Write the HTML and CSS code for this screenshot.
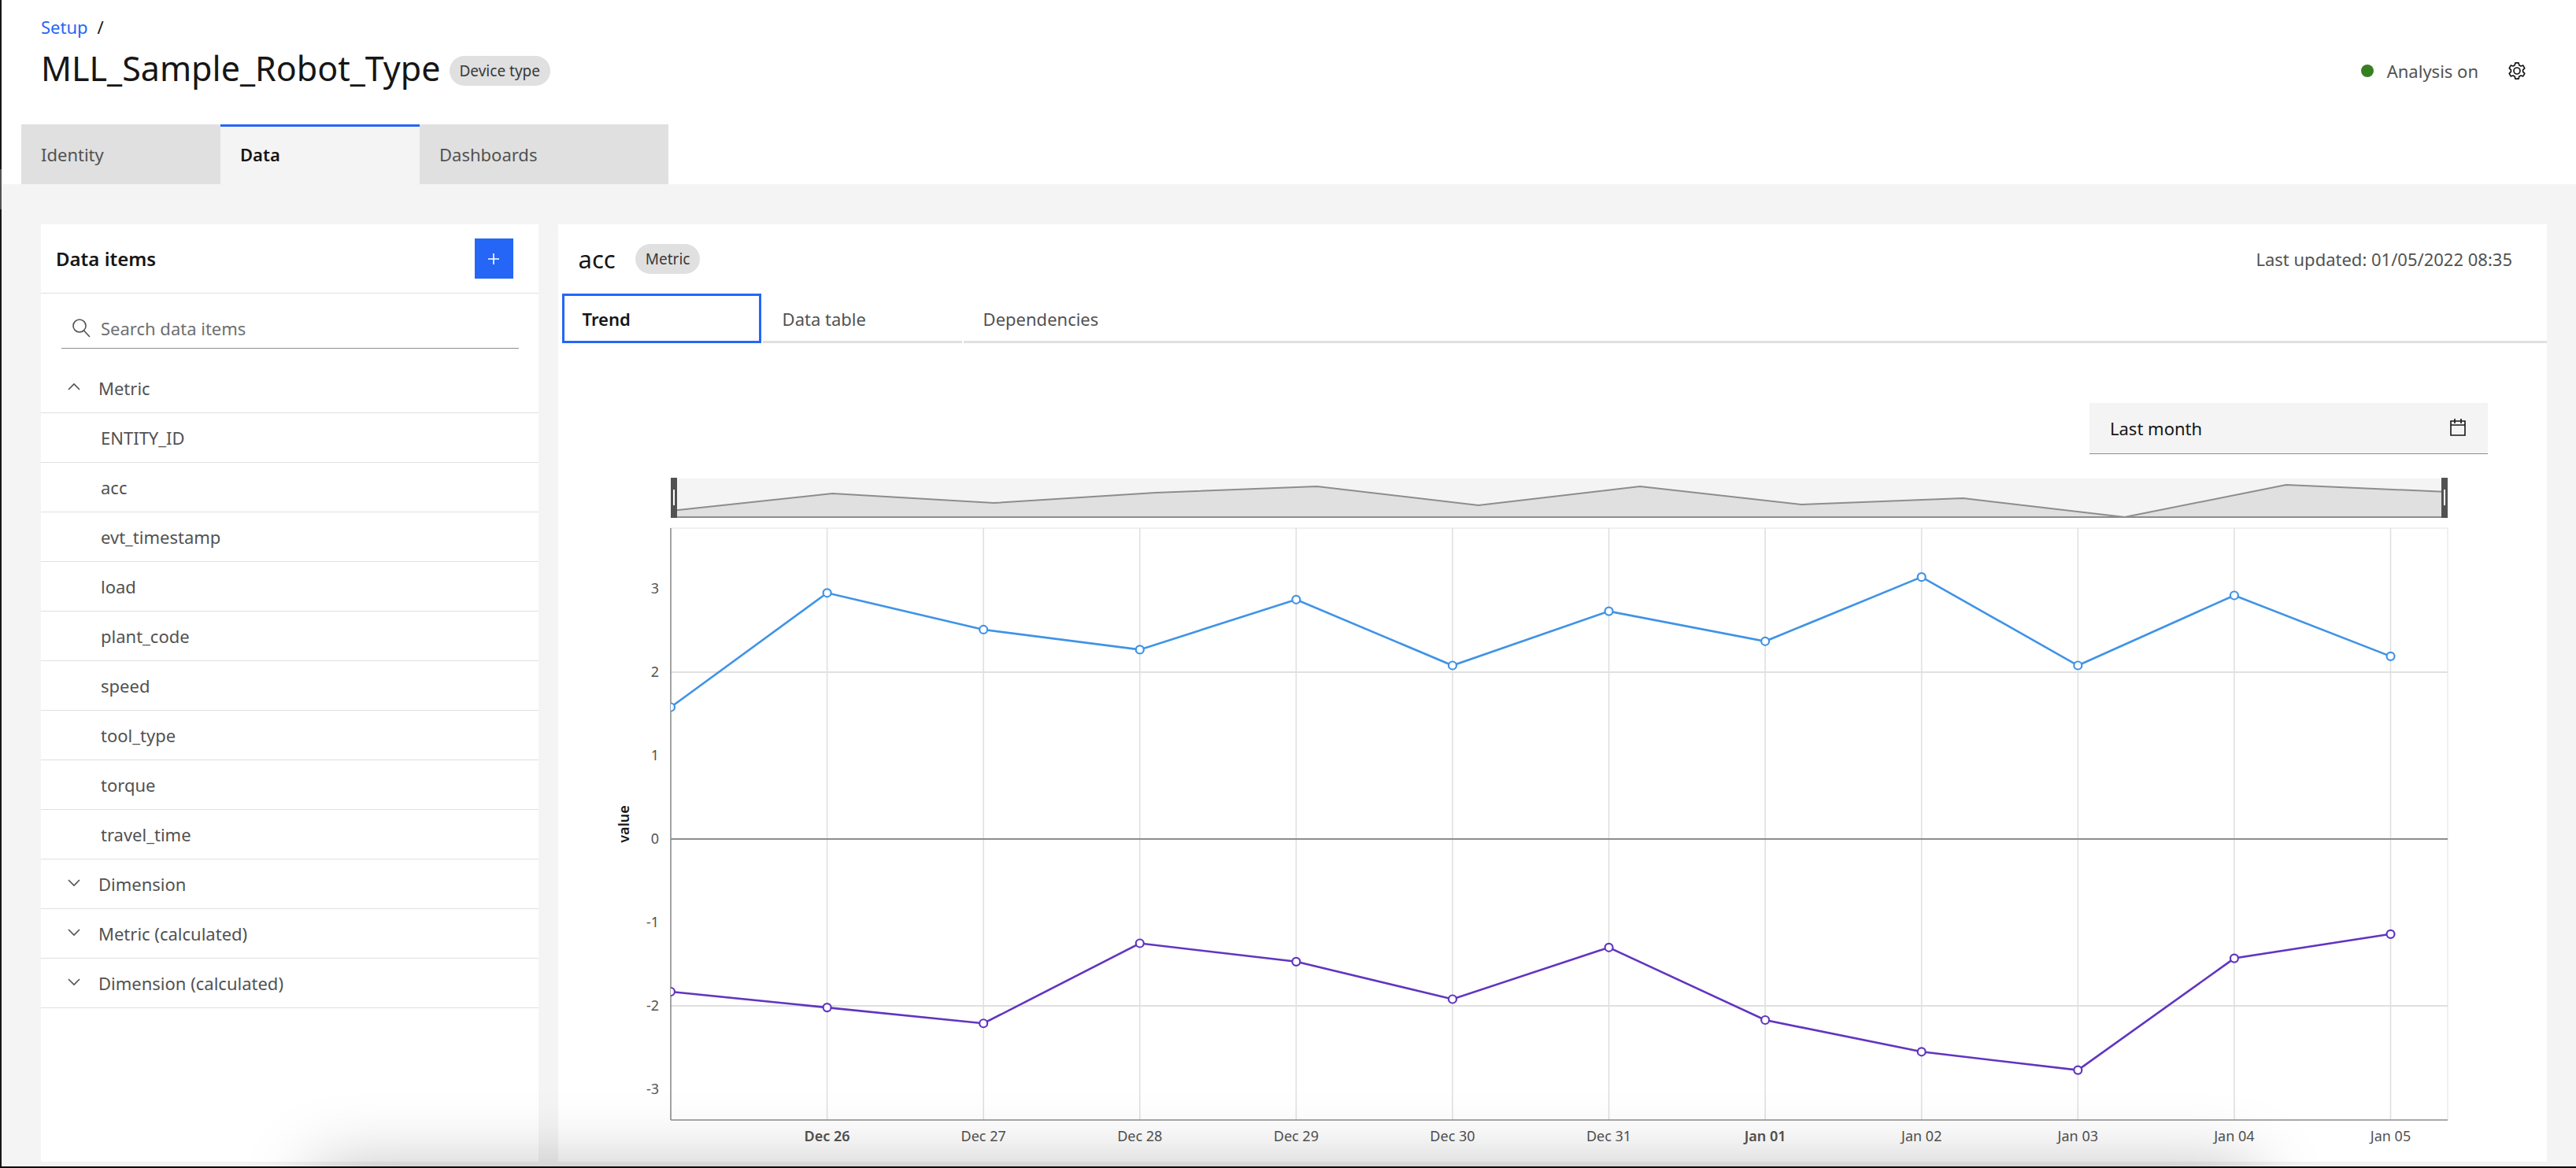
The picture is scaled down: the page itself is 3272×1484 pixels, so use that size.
FILE: index.html
```html
<!DOCTYPE html>
<html lang="en">
<head>
    <meta charset="UTF-8">
    <meta name="viewport" content="width=device-width, initial-scale=1.0">
    <title>MLL_Sample_Robot_Type</title>
    <link rel="stylesheet" href="styles.css">
</head>
<body>
    <header class="page-header">
        <nav class="breadcrumb" aria-label="Breadcrumb">
            <a href="#">Setup</a>
            <span>/</span>
        </nav>
        <div class="title-row">
            <h1>MLL_Sample_Robot_Type</h1>
            <span class="tag">Device type</span>
            <div class="status">
                <span class="status-dot"></span>
                <span>Analysis on</span>
                <button type="button" class="icon-button" aria-label="Settings">
                    <svg viewBox="0 0 24 24" width="24" height="24" fill="none" stroke="currentColor" stroke-width="1.7" stroke-linejoin="round">
                        <path d="M10 1.800h4l.8 3 2 1.200 3-.9 2 3.500-2.200 2.200v2.400l2.200 2.200-2 3.500-3-.9-2 1.200-.8 3h-4l-.8-3-2-1.200-3 .9-2-3.500 2.200-2.200v-2.400L2.200 8.600l2-3.500 3 .9 2-1.200z"/>
                        <circle cx="12" cy="12" r="4"/>
                    </svg>
                </button>
            </div>
        </div>
        <div class="main-tabs" role="tablist">
            <button type="button" role="tab">Identity</button>
            <button type="button" role="tab" class="selected" aria-selected="true">Data</button>
            <button type="button" role="tab" class="wide">Dashboards</button>
        </div>
    </header>

    <main class="content">
        <section class="panel">
            <div class="panel-header">
                <h2>Data items</h2>
                <button type="button" class="add-button" aria-label="Add data item">
                    <svg viewBox="0 0 14 14" width="14" height="14" stroke="currentColor" stroke-width="1.6"><path d="M7 0v14M0 7h14"/></svg>
                </button>
            </div>
            <div class="search">
                <svg viewBox="0 0 24 24" width="24" height="24" fill="none" stroke="currentColor" stroke-width="1.6"><circle cx="10" cy="9" r="8"/><path d="M15.500 15l7.500 8"/></svg>
                <input type="search" aria-label="Search data items" placeholder="Search data items">
            </div>
            <ul class="item-list">
                <li><button type="button" class="category" aria-expanded="true"><svg viewBox="0 0 16 14" width="16" height="14"><path d="M1 9l7-7 7 7"/></svg>Metric</button></li>
                <li><button type="button">ENTITY_ID</button></li>
                <li><button type="button">acc</button></li>
                <li><button type="button">evt_timestamp</button></li>
                <li><button type="button">load</button></li>
                <li><button type="button">plant_code</button></li>
                <li><button type="button">speed</button></li>
                <li><button type="button">tool_type</button></li>
                <li><button type="button">torque</button></li>
                <li><button type="button">travel_time</button></li>
                <li><button type="button" class="category"><svg viewBox="0 0 16 14" width="16" height="14"><path d="M1 2l7 7 7-7"/></svg>Dimension</button></li>
                <li><button type="button" class="category"><svg viewBox="0 0 16 14" width="16" height="14"><path d="M1 2l7 7 7-7"/></svg>Metric (calculated)</button></li>
                <li><button type="button" class="category"><svg viewBox="0 0 16 14" width="16" height="14"><path d="M1 2l7 7 7-7"/></svg>Dimension (calculated)</button></li>
            </ul>
        </section>

        <section class="panel">
            <div class="detail-header">
                <h2>acc</h2>
                <span class="tag">Metric</span>
                <span class="updated">Last updated: 01/05/2022 08:35</span>
            </div>
            <div class="sub-tabs" role="tablist">
                <button type="button" role="tab" class="selected" aria-selected="true">Trend</button>
                <button type="button" role="tab">Data table</button>
                <button type="button" role="tab">Dependencies</button>
            </div>
            <div class="trend">
                <button type="button" class="date-picker">
                    <span>Last month</span>
                    <svg viewBox="0 0 24 24" width="24" height="24" fill="none" stroke="currentColor" stroke-width="1.6"><path d="M3 3h18v18H3zM3 8h18M8 0v6M16 0v6"/></svg>
                </button>
                <svg id="trendChart" class="chart" role="img" aria-label="acc trend"></svg>
            </div>
        </section>
    </main>
    <div class="bottom-shadow"></div>

    <script src="chart.js"></script>
</body>
</html>
```
FILE: styles.css
```css
* {
    box-sizing: border-box;
}
body {
    font-family: "Noto Sans", sans-serif;
    font-size: 22px;
    line-height: 28px;
    display: flex;
    flex-direction: column;
    min-height: 100vh;
    margin: 0;
    border-left: 2px solid #161616;
    border-bottom: 2px solid #000;
    background-color: #f4f4f4;
    color: #525252;
}
/* lighter mark on the dark window edge */
body::before {
    content: "";
    position: absolute;
    left: 0;
    top: 215px;
    width: 2px;
    height: 51px;
    background-color: #525252;
}
button, input {
    font: inherit;
    color: inherit;
    margin: 0;
    padding: 0;
    border: none;
    border-radius: 0;
    background: none;
    text-align: left;
}
button {
    cursor: pointer;
}
svg {
    display: block;
    flex: none;
}
h1, h2 {
    margin: 0;
    color: #161616;
}
.page-header {
    background-color: #fff;
    padding: 20px 50px 0;
}
.breadcrumb {
    display: flex;
    gap: 12px;
    color: #161616;
}
.breadcrumb a {
    color: #2566f7;
    text-decoration: none;
}
.title-row {
    display: flex;
    align-items: center;
    margin-top: 10px;
    height: 64px;
}
h1 {
    padding-bottom: 6px;
    font-size: 43px;
    line-height: 58px;
    font-weight: 400;
}
.tag {
    height: 38px;
    margin-left: 11px;
    padding: 0 13px;
    border-radius: 19px;
    background-color: #e0e0e0;
    color: #393939;
    font-size: 19px;
    line-height: 38px;
}
.status {
    display: flex;
    align-items: center;
    gap: 17px;
    margin-left: auto;
}
.status-dot {
    width: 16px;
    height: 16px;
    border-radius: 50%;
    background-color: #378022;
}
.icon-button {
    margin: 0 13px 0 20px;
    color: #161616;
}
/* main tabs hang a little left of the header text */
.main-tabs {
    display: flex;
    margin: 36px 0 0 -25px;
}
.main-tabs button {
    width: 253px;
    height: 76px;
    padding: 0 25px;
    background-color: #e0e0e0;
}
.main-tabs .wide {
    width: 316px;
}
.main-tabs .selected {
    border-top: 3px solid #2566f7;
    padding-bottom: 3px;
    background-color: #f4f4f4;
    color: #161616;
    font-weight: 600;
}
.content {
    flex: 1;
    display: grid;
    grid-template-columns: minmax(0, 1fr) minmax(0, 4fr);
    gap: 25px;
    padding: 51px 37px 6px 50px;
}
.panel {
    background-color: #fff;
}
.panel-header {
    display: flex;
    align-items: center;
    justify-content: space-between;
    height: 88px;
    padding: 0 32px 0 19px;
    border-bottom: 1px solid #e0e0e0;
}
.panel-header h2 {
    font-size: 24px;
    font-weight: 600;
}
.add-button {
    display: flex;
    align-items: center;
    justify-content: center;
    width: 49px;
    height: 51px;
    background-color: #2566f7;
    color: #fff;
}
.search {
    display: flex;
    align-items: center;
    gap: 13px;
    height: 51px;
    margin: 19px 25px 19px 26px;
    padding-left: 13px;
    border-bottom: 1px solid #8d8d8d;
}
.search input {
    flex: 1;
    min-width: 0;
    outline: none;
}
.search input::placeholder {
    color: #6f6f6f;
    opacity: 1;
}
.item-list {
    list-style: none;
    margin: 0;
    padding: 0;
}
.item-list button {
    display: block;
    width: 100%;
    height: 63px;
    padding-left: 76px;
    border-bottom: 1px solid #e0e0e0;
}
.item-list .category {
    display: flex;
    align-items: center;
    gap: 23px;
    padding-left: 34px;
}
.category svg {
    fill: none;
    stroke: #525252;
    stroke-width: 1.6;
}
.detail-header {
    display: flex;
    align-items: center;
    height: 88px;
    padding: 0 44px 0 26px;
}
.detail-header h2 {
    font-size: 31px;
    font-weight: 400;
}
.detail-header .tag {
    margin-left: 25px;
}
.updated {
    margin-left: auto;
}
.sub-tabs {
    display: flex;
    gap: 2px;
    padding-left: 5px;
}
.sub-tabs button {
    width: 253px;
    height: 63px;
    padding: 3px 25px 0;
    border-bottom: 3px solid #e0e0e0;
}
.sub-tabs button:last-child {
    flex: 1;
}
.sub-tabs .selected {
    padding: 0 23px;
    border: 3px solid #2566f7;
    color: #161616;
    font-weight: 600;
}
.trend {
    padding: 76px 75px 0;
}
.date-picker {
    display: flex;
    align-items: center;
    justify-content: space-between;
    width: 506px;
    height: 65px;
    margin: 0 0 30px auto;
    padding: 0 26px;
    border-bottom: 1px solid #8d8d8d;
    background-color: #f4f4f4;
    color: #161616;
}
.chart {
    width: 100%;
    height: 852px;
    overflow: visible;
}
.chart text {
    font-size: 18px;
    fill: #525252;
}
.chart .bold {
    font-weight: 600;
}
.chart .axis-title {
    font-weight: 600;
    fill: #161616;
}
/* soft shadow along the bottom edge of the window */
.bottom-shadow {
    position: fixed;
    left: 400px;
    right: 410px;
    bottom: -200px;
    height: 200px;
    pointer-events: none;
    box-shadow: 0 0 90px rgba(0, 0, 0, 0.26);
}
```
FILE: chart.js
```js
const svg = document.getElementById('trendChart');
const labels = ['', 'Dec 26', 'Dec 27', 'Dec 28', 'Dec 29', 'Dec 30', 'Dec 31', 'Jan 01', 'Jan 02', 'Jan 03', 'Jan 04', 'Jan 05'];
const boldLabels = ['Dec 26', 'Jan 01'];
const series = [
    { color: '#3f93e6', values: [1.58, 2.95, 2.51, 2.27, 2.87, 2.08, 2.73, 2.37, 3.14, 2.08, 2.92, 2.19] },
    { color: '#6135c0', values: [-1.83, -2.02, -2.21, -1.25, -1.47, -1.92, -1.30, -2.17, -2.55, -2.77, -1.43, -1.14] }
];
// overview strip, height above its base line
const overview = [8, 30, 18, 31, 39, 15, 39, 16, 24, 0, 41, 32];

const marginLeft = 68;
const marginRight = 51;
const plotTop = 64;
const plotBottom = 816;
const zeroY = 459;
const unit = 106;

function add(name, attrs, text) {
    const el = document.createElementNS('http://www.w3.org/2000/svg', name);
    for (const key in attrs) {
        el.setAttribute(key, attrs[key]);
    }
    if (text !== undefined) {
        el.textContent = text;
    }
    svg.appendChild(el);
    return el;
}

function line(x1, y1, x2, y2, color, width) {
    add('line', { x1, y1, x2, y2, stroke: color, 'stroke-width': width });
}

function drawChart() {
    svg.innerHTML = '';
    const left = marginLeft;
    const right = svg.clientWidth - marginRight;
    const width = right - left;
    // the last day is followed by a short part of the next one
    const step = width / 11.365;
    const y = value => zeroY - value * unit;

    // overview strip with its two handles
    add('rect', { x: left, y: 1, width: width, height: 49, fill: '#f4f4f4' });
    const strip = overview.map((v, i) => `${left + i * width / 11},${50 - v}`).join(' ');
    add('polygon', { points: `${left},50 ${strip} ${right},50`, fill: '#e0e0e0' });
    add('polyline', { points: strip, fill: 'none', stroke: '#8d8d8d', 'stroke-width': 2 });
    line(left, 50, right, 50, '#8d8d8d', 2);
    [left, right - 8].forEach(x => {
        add('rect', { x: x, y: 0, width: 8, height: 51, fill: '#525252' });
        add('rect', { x: x + 3, y: 15, width: 2, height: 20, fill: '#fff' });
    });

    // grid and axes
    line(left, plotTop, right, plotTop, '#e0e0e0', 1);
    line(right, plotTop, right, plotBottom, '#e0e0e0', 1);
    [2, -2].forEach(v => line(left, y(v), right, y(v), '#e0e0e0', 2));
    for (let i = 1; i < labels.length; i++) {
        line(left + i * step, plotTop, left + i * step, plotBottom, '#e0e0e0', 1.6);
    }
    line(left, y(0), right, y(0), '#8d8d8d', 2);
    line(left, plotTop, left, plotBottom, '#8d8d8d', 1.6);
    line(left, plotBottom, right, plotBottom, '#8d8d8d', 1.6);

    for (let v = -3; v <= 3; v++) {
        add('text', { x: left - 15, y: y(v) + 6, 'text-anchor': 'end' }, v);
    }
    labels.forEach((label, i) => {
        add('text', {
            x: left + i * step, y: plotBottom + 27, 'text-anchor': 'middle',
            class: boldLabels.includes(label) ? 'bold' : ''
        }, label);
    });
    add('text', { class: 'axis-title', 'text-anchor': 'middle', transform: `translate(${left - 53} 440) rotate(-90)` }, 'value');

    // markers on the first day are cut by the axis
    add('clipPath', { id: 'plot' }).innerHTML = `<rect x="${left}" y="${plotTop}" width="${width}" height="${plotBottom - plotTop}"/>`;
    series.forEach(s => {
        add('polyline', {
            points: s.values.map((v, i) => `${left + i * step},${y(v)}`).join(' '),
            fill: 'none', stroke: s.color, 'stroke-width': 2.6
        });
        s.values.forEach((v, i) => {
            add('circle', { cx: left + i * step, cy: y(v), r: 5, fill: '#fff', stroke: s.color, 'stroke-width': 2.2, 'clip-path': 'url(#plot)' });
        });
    });
}

drawChart();
window.addEventListener('resize', drawChart);
```
